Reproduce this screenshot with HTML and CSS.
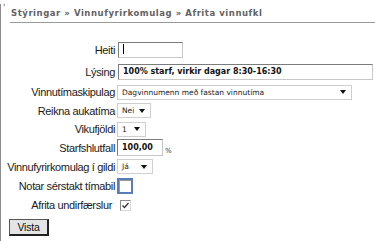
FILE: index.html
```html
<!DOCTYPE html>
<html>
<head>
<meta charset="utf-8">
<link rel="stylesheet" href="styles.css">
</head>
<body>
<div class="page">
  <div class="crumbs">Stýringar » Vinnufyrirkomulag » Afrita vinnufkl</div>
  <div class="form">
    <div class="lbl">Heiti</div><div class="fld"><div class="inp inp-short"><span class="caret"></span></div></div>
    <div class="lbl">Lýsing</div><div class="fld"><div class="inp inp-long">100% starf, virkir dagar 8:30-16:30</div></div>
    <div class="lbl">Vinnutímaskipulag</div><div class="fld"><div class="sel sel-wide"><span>Dagvinnumenn með fastan vinnutíma</span><i class="arr"></i></div></div>
    <div class="lbl">Reikna aukatíma</div><div class="fld"><div class="sel sel-nei"><span>Nei</span><i class="arr"></i></div></div>
    <div class="lbl">Vikufjöldi</div><div class="fld"><div class="sel sel-one"><span>1</span><i class="arr"></i></div></div>
    <div class="lbl">Starfshlutfall</div><div class="fld"><div class="pctwrap"><div class="inp inp-pct">100,00</div><span class="pct">%</span></div></div>
    <div class="lbl">Vinnufyrirkomulag í gildi</div><div class="fld"><div class="sel sel-ja"><span>Já</span><i class="arr"></i></div></div>
    <div class="lbl">Notar sérstakt tímabil</div><div class="fld"><div class="cb cb-focus"></div></div>
    <div class="lbl lbl-afr">Afrita undirfærslur</div><div class="fld"><div class="cb cb-small"><svg width="9" height="9" viewBox="0 0 9 9"><path d="M1.5 4.5 L3.5 6.5 L7.5 2" fill="none" stroke="#333" stroke-width="1.3"/></svg></div></div>
  </div>
  <div class="actions"><button class="btn">Vista</button></div>
</div>
</body>
</html>
```

FILE: styles.css
```css
html, body {
  margin: 0;
  padding: 0;
  background: #fff;
  height: 241px;
  overflow: hidden;
}
.page {
  position: relative;
  height: 237px;
  margin-top: 4px;
  border-left: 1px solid #8c8c8c;
  font-family: "Liberation Sans", Arial, sans-serif;
  color: #222;
}
.page::before {
  content: "";
  position: absolute;
  left: 2px;
  top: -1px;
  border-style: solid;
  border-width: 2px 2px 2px 0;
  border-color: transparent #b0b0b0 transparent transparent;
}
.crumbs {
  margin-left: 9px;
  padding: 5px 0 4px 1px;
  border-bottom: 1px solid #9a9a9a;
  font-family: "DejaVu Sans", Verdana, sans-serif;
  font-weight: bold;
  font-size: 8.5px;
  letter-spacing: 0.55px;
  color: #626262;
  line-height: 9px;
}
.form {
  display: grid;
  grid-template-columns: 108px auto;
  grid-template-rows: 23px 22px 18px 19px 18px 19px 19px 19px 20px;
  margin-top: 15px;
  margin-left: 8px;
}
.lbl {
  display: flex;
  align-items: center;
  justify-content: flex-end;
  padding-right: 2px;
  font-size: 11px;
  letter-spacing: -0.35px;
  white-space: nowrap;
  color: #1a1a1a;
}
.lbl-afr { padding-right: 5px; }
.fld {
  display: flex;
  align-items: center;
}
.inp {
  box-sizing: border-box;
  height: 16px;
  border: 1px solid #7c7c7c;
  border-right-color: #c8c8c8;
  border-bottom-color: #c8c8c8;
  background: #fff;
  font-family: "DejaVu Sans", Verdana, sans-serif;
  font-weight: bold;
  font-size: 8px;
  line-height: 14px;
  padding-left: 4px;
  color: #111;
  letter-spacing: 0px;
  white-space: nowrap;
}
.inp-short { width: 65px; margin-left: 1px; }
.inp-long { width: 255px; margin-left: 1px; }
.inp-pct { width: 46px; height: 17px; line-height: 15px; padding-left: 4px; }
.caret {
  display: inline-block;
  width: 1px;
  height: 10px;
  background: #000;
  vertical-align: -2px;
  margin-left: 0;
}
.pctwrap { display: flex; align-items: flex-end; gap: 2px; }
.pct {
  font-family: "DejaVu Sans", Verdana, sans-serif;
  font-size: 7px;
  color: #333;
  line-height: 10px;
}
.sel {
  box-sizing: border-box;
  height: 15px;
  border: 1px solid #cfcfcf;
  background: #fff;
  display: flex;
  align-items: center;
  justify-content: space-between;
  padding: 0 5px 0 4px;
  font-family: "DejaVu Sans", Verdana, sans-serif;
  font-size: 7.5px;
  color: #222;
  white-space: nowrap;
}
.arr {
  width: 0;
  height: 0;
  border-left: 3.5px solid transparent;
  border-right: 3.5px solid transparent;
  border-top: 4px solid #111;
}
.sel-wide { width: 235px; }
.sel-nei { width: 34px; }
.sel-one { width: 29px; }
.sel-ja { width: 36px; }
.cb {
  box-sizing: border-box;
  background: #fff;
}
.cb-focus {
  width: 16px;
  height: 16px;
  border: 2px solid #5a7db8;
  box-shadow: inset 1px 1px 0 #9a9a9a;
}
.cb-small {
  width: 11px;
  height: 11px;
  margin-left: 3px;
  border: 1px solid #8c8c8c;
  border-right-color: #d8d8d8;
  border-bottom-color: #d8d8d8;
  display: flex;
  align-items: center;
  justify-content: center;
}
.cb-small svg { display: block; }
.actions {
  margin-top: 4px;
  margin-left: 8px;
  display: flex;
}
.btn {
  box-sizing: border-box;
  width: 40px;
  height: 17px;
  padding: 0;
  background: #e4e4e4;
  border: 1px solid #555;
  border-right: 2px solid #222;
  border-bottom: 2px solid #222;
  font-family: "Liberation Sans", Arial, sans-serif;
  font-size: 10.5px;
  color: #111;
  letter-spacing: -0.2px;
  line-height: 13px;
}
```
